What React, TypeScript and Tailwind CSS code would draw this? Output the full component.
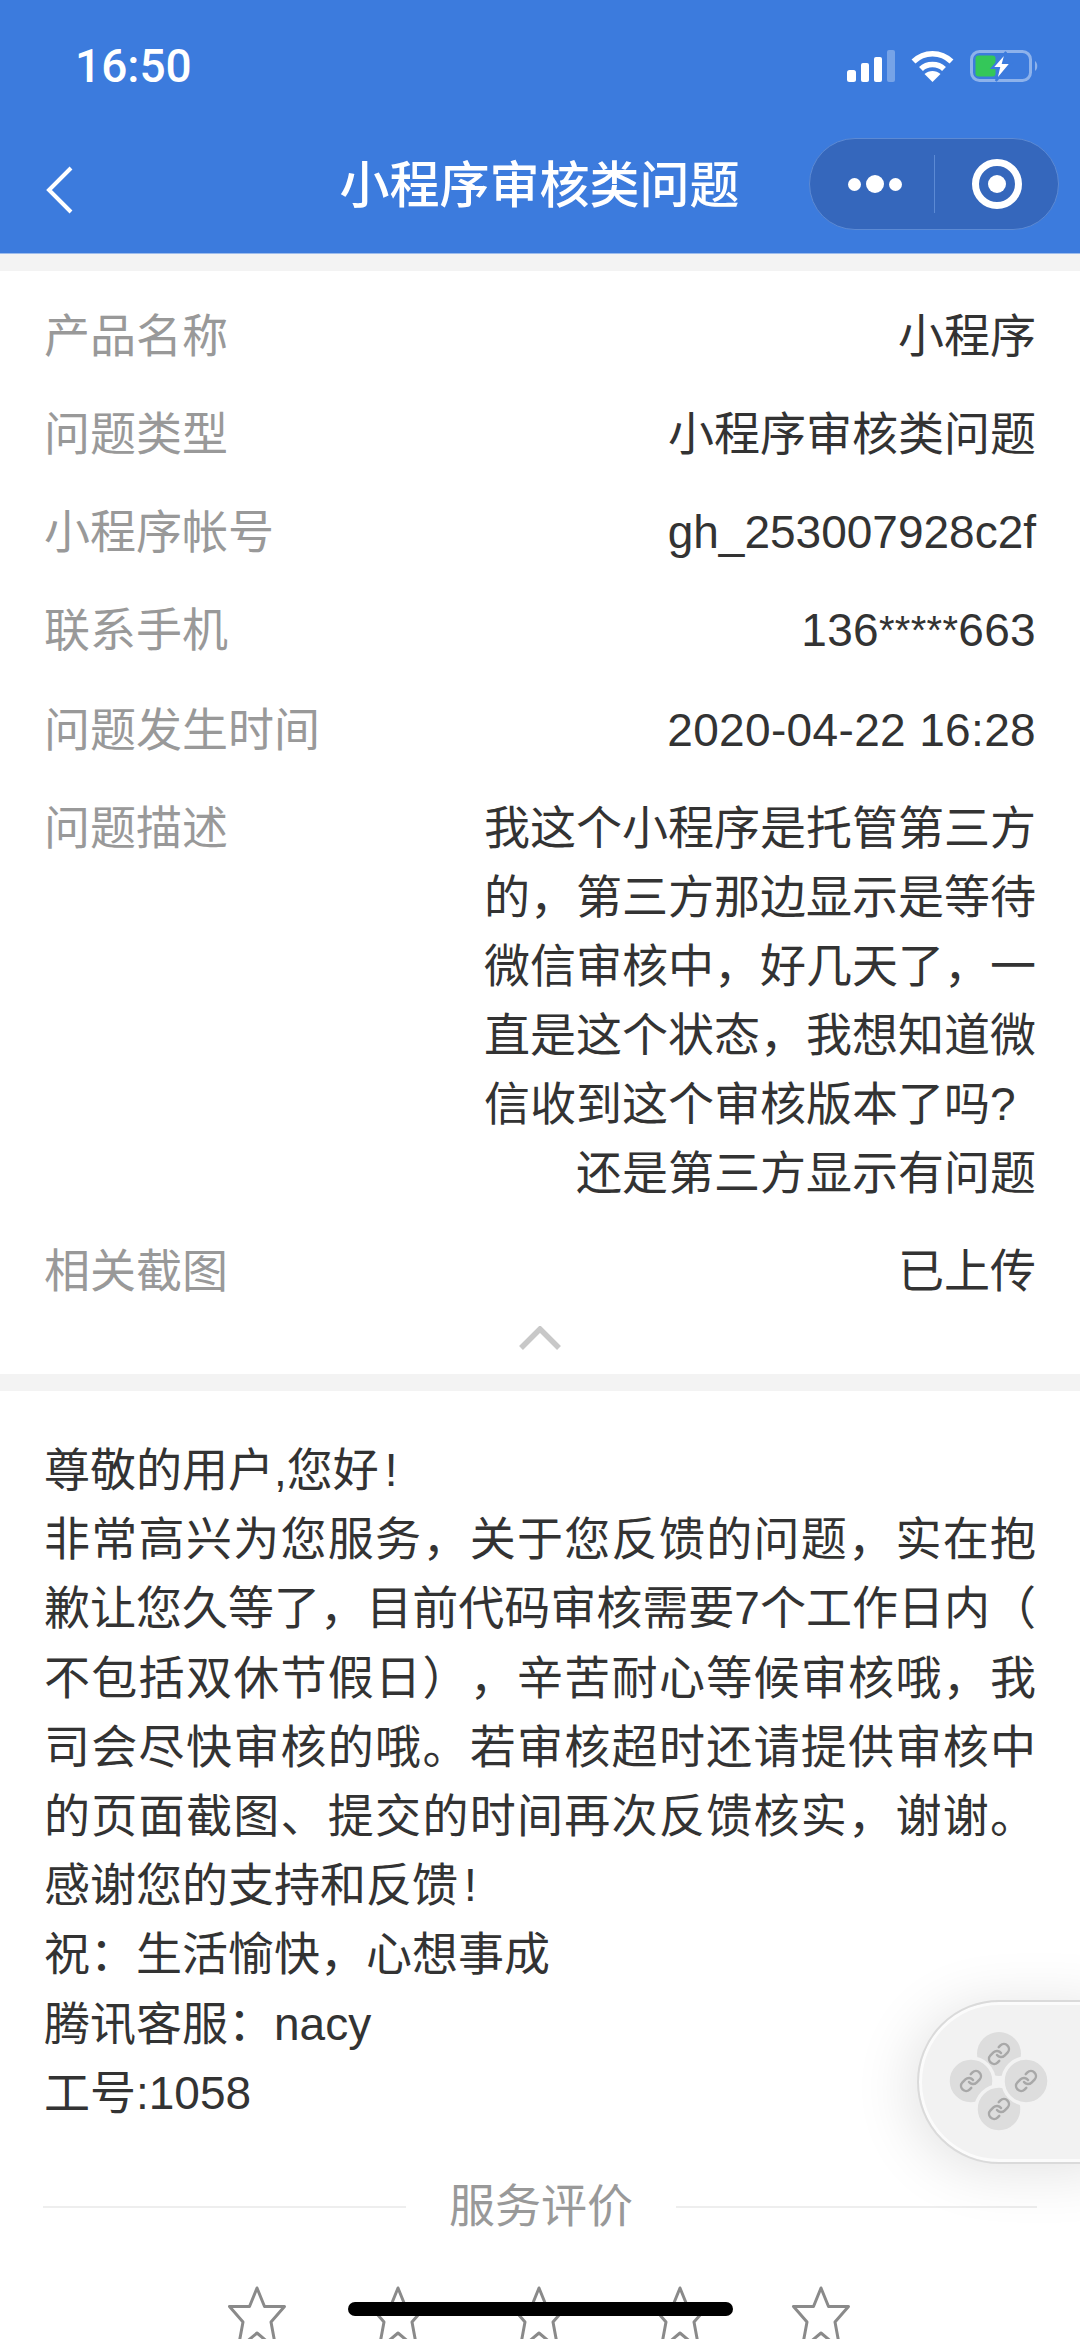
const FONT = "font-['Liberation_Sans','Noto_Sans_CJK_SC',sans-serif]";

const rows: [string, React.ReactNode][] = [
  ["产品名称", "小程序"],
  ["问题类型", "小程序审核类问题"],
  ["小程序帐号", "gh_253007928c2f"],
  [
    "联系手机",
    <span className="tracking-[0.3px]">
      136<span className="inline-block -translate-y-[2px] text-[40px]">*****</span>663
    </span>,
  ],
  ["问题发生时间", <span className="tracking-[0.35px]">2020-04-22 16:28</span>],
];

const description = [
  "我这个小程序是托管第三方",
  "的，第三方那边显示是等待",
  "微信审核中，好几天了，一",
  "直是这个状态，我想知道微",
  "信收到这个审核版本了吗?",
];

const justified = [
  "非常高兴为您服务，关于您反馈的问题，实在抱",
  "歉让您久等了，目前代码审核需要7个工作日内（",
  "不包括双休节假日），辛苦耐心等候审核哦，我",
  "司会尽快审核的哦。若审核超时还请提供审核中",
  "的页面截图、提交的时间再次反馈核实，谢谢。",
];

function Star() {
  return (
    <svg width="60" height="66" viewBox="0 0 60 66" className="shrink-0" fill="none" stroke="#8a8a8a" strokeWidth="3">
      <path d="M30 2 L37.5 20.5 L57.5 20.5 L44 36 L49 63 L30 47 L11 63 L16 36 L2.5 20.5 L22.5 20.5 Z" strokeLinejoin="round" />
    </svg>
  );
}

function Link({ x, y }: { x: number; y: number }) {
  return (
    <g transform={`translate(${x - 12} ${y - 12})`} fill="none" stroke="#a8a8a8" strokeWidth="2.5" strokeLinecap="round">
      <path d="M10 13a5 5 0 0 0 7.54.54l3-3a5 5 0 0 0-7.07-7.07l-1.72 1.71" />
      <path d="M14 11a5 5 0 0 0-7.54-.54l-3 3a5 5 0 0 0 7.07 7.07l1.71-1.71" />
    </g>
  );
}

export default function App() {
  return (
    <div className={`relative h-[2339px] w-[1080px] overflow-hidden bg-white ${FONT}`}>
      <header className="h-[253px] bg-[#3c7bdd] text-white">
        <div className="flex h-[133px] items-start justify-between pl-[75px] pr-[42px] pt-[41px]">
          <span className="font-['Roboto',sans-serif] text-[46px] leading-[50px] font-medium">16:50</span>
          <div className="mt-[9px] flex items-center gap-[16px]">
            <svg width="48" height="32" viewBox="0 0 48 32">
              <rect x="0" y="20" width="9" height="12" rx="2.5" fill="#fff" />
              <rect x="14" y="13" width="8" height="19" rx="2" fill="#fff" />
              <rect x="27" y="7" width="8" height="25" rx="2" fill="#fff" />
              <rect x="40" y="0" width="8" height="32" rx="2" fill="#fff" fillOpacity="0.3" />
            </svg>
            <svg width="43" height="32" viewBox="0 0 43 32" fill="none" stroke="#fff" strokeWidth="5.5">
              <path d="M2.5 11.5 C13 1 30 1 40.5 11.5" />
              <path d="M10 19 C16 13 27 13 33 19" />
              <path d="M21.5 32 L13.5 24 C18 20 25 20 29.5 24 Z" fill="#fff" stroke="none" />
            </svg>
            <svg width="68" height="32" viewBox="0 0 68 32">
              <rect x="1.5" y="1.5" width="59" height="29" rx="8" fill="none" stroke="#fff" strokeOpacity="0.42" strokeWidth="3" />
              <rect x="5.5" y="5.5" width="20" height="21" rx="3" fill="#34c759" />
              <path d="M65 11 C68 13 68 19 65 21 Z" fill="#fff" fillOpacity="0.42" />
              <path d="M36 2 L22 18 H29 L26 31 L41 13 H33 Z" fill="#fff" stroke="#3c7bdd" strokeWidth="2" />
            </svg>
          </div>
        </div>
        <div className="relative flex h-[97px] items-center">
          <svg width="30" height="50" viewBox="0 0 30 50" className="ml-[45px] mt-[16px]" fill="none" stroke="#fff" strokeWidth="4">
            <path d="M26 3 L4 25 L26 47" />
          </svg>
          <h1 className="absolute left-0 right-0 mt-[9px] text-center text-[50px] font-medium leading-[70px] pr-[1px]">小程序审核类问题</h1>
          <div className="absolute right-[21px] top-[5px] flex h-[92px] w-[250px] items-center rounded-full border border-[#5c8ad4] bg-[#3567bc]">
            <div className="flex w-[124px] items-center justify-center gap-[5px] pl-[6px]">
              <span className="h-[13px] w-[13px] rounded-full bg-white" />
              <span className="h-[18px] w-[18px] rounded-full bg-white" />
              <span className="h-[13px] w-[13px] rounded-full bg-white" />
            </div>
            <span className="h-[58px] w-px bg-[#5c8ad4]" />
            <div className="flex flex-1 items-center justify-center">
              <span className="flex h-[50px] w-[50px] items-center justify-center rounded-full border-[7px] border-white">
                <span className="h-[18px] w-[18px] rounded-full bg-white" />
              </span>
            </div>
          </div>
        </div>
      </header>
      <div className="h-[18px] border-t border-[#9dbcec] bg-[#f3f3f3]" />

      <section className="h-[1103px] px-[44px] pt-[31px] text-[46px] leading-[69px]">
        {rows.map(([label, value]) => (
          <div key={label} className="mb-[29px] flex justify-between">
            <span className="text-[#999999]">{label}</span>
            <span className="text-[#333333]">{value}</span>
          </div>
        ))}
        <div className="mb-[29px] flex justify-between">
          <span className="text-[#999999]">问题描述</span>
          <div className="w-[552px] text-[#333333]">
            {description.map((line) => (
              <div key={line} className="whitespace-nowrap">{line}</div>
            ))}
            <div className="whitespace-nowrap text-right">还是第三方显示有问题</div>
          </div>
        </div>
        <div className="flex justify-between">
          <span className="text-[#999999]">相关截图</span>
          <span className="text-[#333333]">已上传</span>
        </div>
        <svg width="42" height="24" viewBox="0 0 42 24" fill="none" stroke="#c8c8c8" strokeWidth="5.5" className="mx-auto mt-[20px]">
          <path d="M2 22 L21 3 L40 22" />
        </svg>
      </section>
      <div className="h-[17px] bg-[#f3f3f3]" />

      <section className="px-[44px] pt-[45px] text-[46px] leading-[69.2px] text-[#333333] [text-spacing-trim:space-all]">
        <div>
          尊敬的用户,您好<span className="ml-[6px]">!</span>
        </div>
        {justified.map((line) => (
          <div key={line} className="text-justify [text-align-last:justify]">{line}</div>
        ))}
        <div>
          感谢您的支持和反馈<span className="ml-[6px]">!</span>
        </div>
        <div>祝：生活愉快，心想事成</div>
        <div>腾讯客服：nacy</div>
        <div>工号:1058</div>
        <div className="-mx-px mt-[44px] flex items-center justify-between">
          <span className="h-[2px] w-[363px] bg-[#eeeeee]" />
          <span className="text-[#999999]">服务评价</span>
          <span className="h-[2px] w-[361px] bg-[#eeeeee]" />
        </div>
        <div className="ml-[183px] mt-[45px] flex gap-[81px]">
          <Star />
          <Star />
          <Star />
          <Star />
          <Star />
        </div>
      </section>

      <div className="absolute left-[917px] top-[2000px] h-[164px] w-[200px] rounded-l-[82px] border-2 border-[#dadada] bg-[#f2f2f2] shadow-[-6px_6px_60px_rgba(0,0,0,0.12),inset_0_0_0_3px_#fbfbfb]">
        <svg width="110" height="110" viewBox="0 0 110 110" className="absolute left-[25px] top-[28px]">
          <circle cx="55" cy="24" r="22" fill="#dddddd" />
          <circle cx="27" cy="51" r="23" fill="#dddddd" stroke="#f2f2f2" strokeWidth="3.5" />
          <circle cx="55" cy="79" r="23" fill="#dddddd" stroke="#f2f2f2" strokeWidth="3.5" />
          <circle cx="82" cy="51" r="23" fill="#dddddd" stroke="#f2f2f2" strokeWidth="3.5" />
          <Link x={55} y={24} />
          <Link x={27} y={51} />
          <Link x={82} y={51} />
          <Link x={55} y={79} />
        </svg>
      </div>

      <div className="absolute left-[348px] top-[2302px] h-[14px] w-[385px] rounded-full bg-black" />
    </div>
  );
}
